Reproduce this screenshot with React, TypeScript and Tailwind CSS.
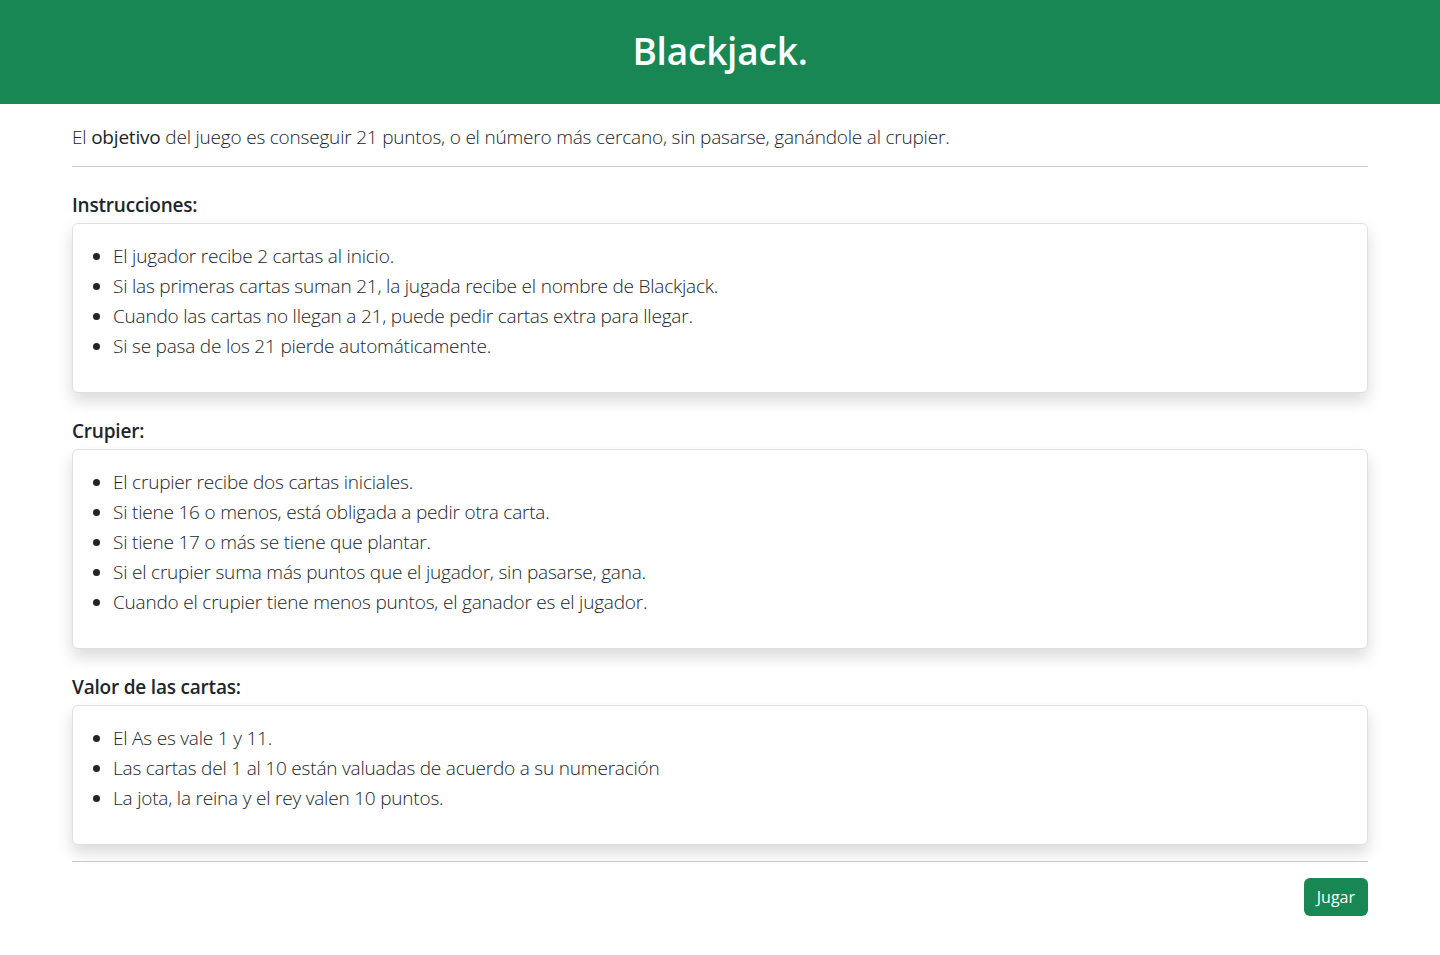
const secciones = [
  {
    titulo: "Instrucciones:",
    items: [
      "El jugador recibe 2 cartas al inicio.",
      "Si las primeras cartas suman 21, la jugada recibe el nombre de Blackjack.",
      "Cuando las cartas no llegan a 21, puede pedir cartas extra para llegar.",
      "Si se pasa de los 21 pierde automáticamente.",
    ],
  },
  {
    titulo: "Crupier:",
    items: [
      "El crupier recibe dos cartas iniciales.",
      "Si tiene 16 o menos, está obligada a pedir otra carta.",
      "Si tiene 17 o más se tiene que plantar.",
      "Si el crupier suma más puntos que el jugador, sin pasarse, gana.",
      "Cuando el crupier tiene menos puntos, el ganador es el jugador.",
    ],
  },
  {
    titulo: "Valor de las cartas:",
    items: [
      "El As es vale 1 y 11.",
      "Las cartas del 1 al 10 están valuadas de acuerdo a su numeración",
      "La jota, la reina y el rey valen 10 puntos.",
    ],
  },
];

export default function App() {
  return (
    <div className="min-h-screen bg-white text-[#212529] font-['Open_Sans',sans-serif]">
      <header className="h-[104px] bg-[#198754] flex items-center justify-center">
        <h1 className="text-[37px] font-semibold text-white leading-none pb-1 tracking-[-0.2px]">Blackjack.</h1>
      </header>

      <main className="max-w-[1320px] mx-auto px-3">
        <p className="mt-[18px] text-[19px] font-light leading-[30px] tracking-[-0.2px]">
          El <span className="font-normal">objetivo</span> del juego es conseguir 21 puntos, o el número más cercano, sin pasarse, ganándole al crupier.
        </p>
        <hr className="mt-[14px] border-t border-[#c8c9ca]" />

        {secciones.map((s, i) => (
          <section key={s.titulo} className={i === 0 ? "mt-[26px]" : "mt-[26px]"}>
            <h5 className="text-[19px] font-semibold leading-6 mb-[6px] tracking-[-0.2px]">{s.titulo}</h5>
            <div className="border border-[#dedfe0] rounded-md bg-white shadow-[0_8px_16px_rgba(0,0,0,0.15)] px-4 pt-[17px] pb-[15px]">
              <ul className="list-disc pl-6 mb-4">
                {s.items.map((t) => (
                  <li key={t} className="text-[19px] font-light leading-[30px] tracking-[-0.2px]">{t}</li>
                ))}
              </ul>
            </div>
          </section>
        ))}

        <hr className="mt-4 border-t border-[#c8c9ca]" />
        <div className="flex justify-end mt-4">
          <button className="h-[38px] px-[13px] rounded-md bg-[#198754] text-white text-[16px]">Jugar</button>
        </div>
      </main>
    </div>
  );
}
